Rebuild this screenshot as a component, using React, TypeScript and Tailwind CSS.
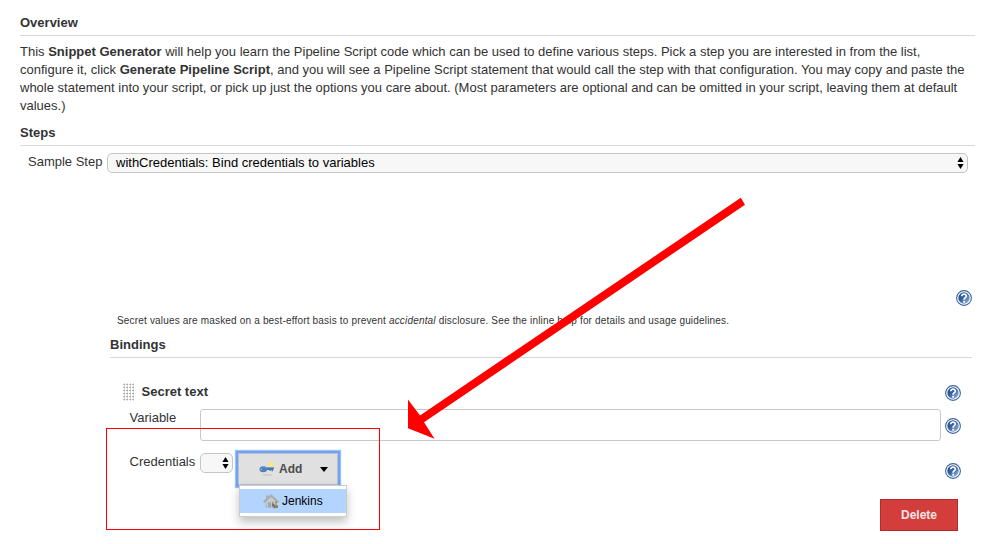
import type { ReactNode } from 'react';

function Help() {
  return (
    <svg className="block size-4 shrink-0" viewBox="0 0 16 16">
      <defs>
        <linearGradient id="helpFill" x1="0" y1="0" x2="1" y2="1">
          <stop offset="0" stopColor="#1f4582" />
          <stop offset="0.45" stopColor="#3563a2" />
          <stop offset="1" stopColor="#a3c2e2" />
        </linearGradient>
      </defs>
      <circle cx="8" cy="8" r="7.4" fill="#fff" stroke="#3a669f" strokeWidth="1.1" />
      <circle cx="8" cy="8" r="5.7" fill="url(#helpFill)" />
      <path d="M5.7 6.2C5.7 3.4 10.5 3.5 10.3 6.2C10.2 7.7 8.1 7.8 8.1 9.7" fill="none" stroke="#fff" strokeWidth="1.7" />
      <rect x="7.2" y="10.8" width="1.9" height="1.8" fill="#fff" />
    </svg>
  );
}

function Arrows() {
  return (
    <svg className="block h-3 w-[7px] shrink-0" viewBox="0 0 7 12">
      <path d="M3.5 0L6.6 5H0.4ZM3.5 12L6.6 7H0.4Z" fill="#000" />
    </svg>
  );
}

function Heading({ children, className }: { children: ReactNode; className: string }) {
  return <h2 className={`border-b border-[#d9d9d9] font-bold leading-[18px] ${className}`}>{children}</h2>;
}

function Grip() {
  return (
    <svg className="block h-[18px] w-3 shrink-0" viewBox="0 0 12 18">
      {[0, 1, 2, 3, 4, 5].map((r) =>
        [0, 1, 2, 3].map((c) => (
          <path key={`${r}-${c}`} d={`M${c * 3} ${r * 3 + 1.5}h2M${c * 3 + 1.5} ${r * 3 + 0.5}v2`} stroke="#aaa" strokeWidth="0.9" />
        )),
      )}
    </svg>
  );
}

function KeyIcon() {
  return (
    <svg className="block size-4 shrink-0" viewBox="0 0 16 16">
      <ellipse cx="8" cy="13.9" rx="5.5" ry="0.8" fill="#cbcbcb" />
      <circle cx="12.2" cy="3.2" r="2.3" fill="#fbe45c" />
      <path d="M12.2 0.9v4.6M9.9 3.2h4.6" stroke="#fff27a" strokeWidth="0.7" />
      <path d="M6 6.2h8.8v2.4h-0.8v1.6h-1.4V9h-1v0.9h-1.2V8.9H6z" fill="#4a76a8" />
      <ellipse cx="4.3" cy="8.2" rx="3.8" ry="3" fill="#4b7fb8" />
      <path d="M1.6 7C2.6 5.5 5 5.3 6.6 6.6H14" fill="none" stroke="#7ba3cd" strokeWidth="0.9" />
      <ellipse cx="2.5" cy="8.4" rx="0.9" ry="0.7" fill="#a3bdd8" />
    </svg>
  );
}

function HouseIcon() {
  return (
    <svg className="block size-4 shrink-0" viewBox="0 0 16 16">
      <path d="M3 7.5V14.3h10V7L8 2.5z" fill="#c6cbd0" stroke="#a0a5a9" strokeWidth="0.6" />
      <path d="M3 2.5h2v3.5H3z" fill="#a6abad" />
      <path d="M0.8 9L8 2.4L15.2 9" fill="none" stroke="#a2a7ab" strokeWidth="2.2" />
      <path d="M1.3 8L8 1.8L14.7 8" fill="none" stroke="#b9bec2" strokeWidth="0.8" />
      <path d="M5 9.2h3v4.8H5z" fill="#a1a9af" />
      <circle cx="9.9" cy="9.4" r="1" fill="#c09a50" />
      <path d="M8.9 10.4h2v3.2h-2z" fill="#4779b8" />
      <circle cx="13" cy="9.4" r="0.9" fill="#9b7550" />
      <path d="M12.1 10.2h2v2.2h-2z" fill="#c6b043" />
      <path d="M10.6 11.6h1.7v3.7h-1.7z" fill="#c9473d" />
      <path d="M12.6 12.3h2.2v2.7h-2.2z" fill="#3f9258" />
    </svg>
  );
}

export default function App() {
  return (
    <main className="relative h-[544px] w-[988px] overflow-hidden bg-white font-['Liberation_Sans',Arial,sans-serif] text-[13px] text-[#333]">
      <section className="ml-5 w-[955px]">
        <Heading className="h-9 pt-[14px]">Overview</Heading>
        <div className="mt-[7px] whitespace-nowrap leading-[18px]">
          <p>This <b>Snippet Generator</b> will help you learn the Pipeline Script code which can be used to define various steps. Pick a step you are interested in from the list,</p>
          <p>configure it, click <b>Generate Pipeline Script</b>, and you will see a Pipeline Script statement that would call the step with that configuration. You may copy and paste the</p>
          <p>whole statement into your script, or pick up just the options you care about. (Most parameters are optional and can be omitted in your script, leaving them at default</p>
          <p>values.)</p>
        </div>
        <Heading className="h-[31px] pt-[9px]">Steps</Heading>
      </section>

      <div className="flex h-[144px] items-start pl-7 pt-[7px]">
        <label className="w-[79px] leading-[18px]">Sample Step</label>
        <div className="flex h-5 w-[861px] items-center justify-between rounded-[5px] border border-[#c5c5c5] bg-[#f7f7f7] pl-2 pr-[3.5px] text-black">
          <span>withCredentials: Bind credentials to variables</span>
          <Arrows />
        </div>
      </div>

      <section className="ml-[110px] w-[862px]">
        <div className="flex h-4 justify-end"><Help /></div>
        <p className="mt-[8px] h-[14px] whitespace-nowrap pl-[7px] text-[10px] leading-[14px] tracking-[0.175px]">
          Secret values are masked on a best-effort basis to prevent <i>accidental</i> disclosure. See the inline help for details and usage guidelines.
        </p>
        <Heading className="h-[30px] pt-[8px]">Bindings</Heading>
        <div className="mt-[25px] flex h-[26px] items-start pl-[13px]">
          <Grip />
          <b className="ml-[6.5px] grow leading-[18px]">Secret text</b>
          <div className="mr-[11px] mt-[2px]"><Help /></div>
        </div>
        <div className="flex h-8 items-start pl-[19.5px]">
          <label className="w-[70.5px] leading-[18px]">Variable</label>
          <div className="h-8 w-[741px] rounded-[3px] border border-[#c7c7c7] bg-white" />
          <div className="ml-1 mt-[9px]"><Help /></div>
        </div>
        <div className="flex h-[58px] items-start pl-[19.5px] pt-[9px]">
          <label className="mt-[3px] w-[70.5px] leading-[18px]">Credentials</label>
          <div className="mt-[3px] flex h-5 w-[33px] items-center justify-end rounded-[5px] border border-[#c5c5c5] bg-[#f7f7f7] pr-[3.5px]"><Arrows /></div>
          <div className="ml-[5px] mt-[3px] flex h-[32px] w-[100px] items-center border border-[#b9c0cc] bg-[#e0e0e0] pl-[20px] font-bold text-[#4d4d4d] shadow-[0_0_0_2px_#70a3f5,0_0_1px_3px_#9cc0f8]">
            <KeyIcon />
            <span className="ml-1 text-[12px]">Add</span>
            <span className="ml-[18px] border-x-4 border-t-[5px] border-x-transparent border-t-black" />
          </div>
          <div className="grow" />
          <div className="mr-[11px] mt-[13px]"><Help /></div>
        </div>
        <div className="flex justify-end pr-[14px]">
          <button className="h-8 w-[78px] border border-[#b52b2b] bg-[#d33e3c] text-[12px] font-bold text-[#f5e5e5]">Delete</button>
        </div>
      </section>

      <div className="absolute left-[239px] top-[485px] h-8 w-[108px] border border-[#ccc] bg-white py-[3px] shadow-[0_5px_10px_rgba(0,0,0,0.25)]">
        <div className="flex h-6 items-center bg-[#b3d4ff] pl-[23px] text-[12px] text-black">
          <HouseIcon /><span className="ml-[3px]">Jenkins</span>
        </div>
      </div>
      <div className="absolute left-[106px] top-[428px] h-[102px] w-[274px] border border-[#ff0000]" />
      <svg className="pointer-events-none absolute left-0 top-0" width="988" height="544">
        <path d="M408 399.5L420 415.4L740.8 197.8L745 204.7L424 422.2L434.5 438.7L408 428.3Z" fill="#ff0000" />
      </svg>
    </main>
  );
}
